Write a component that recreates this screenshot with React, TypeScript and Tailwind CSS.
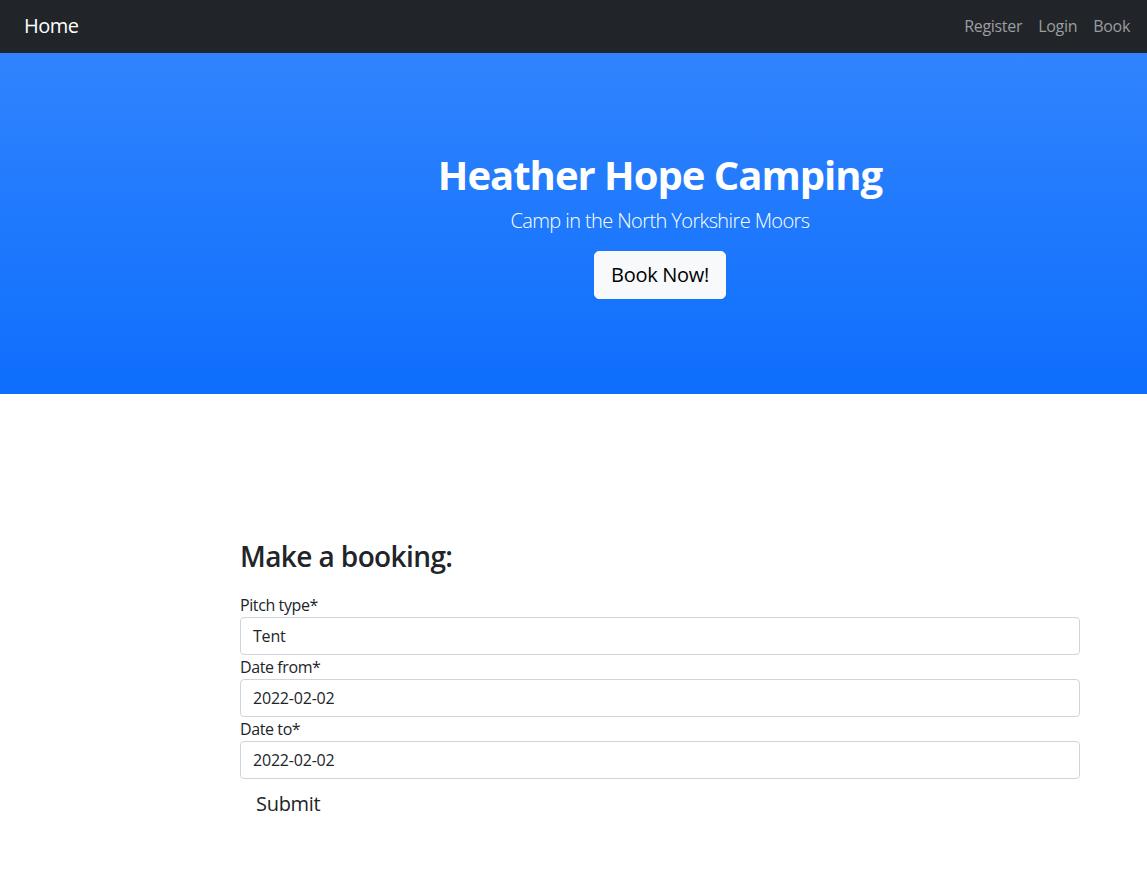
const font = { fontFamily: '"Open Sans", "Noto Sans", sans-serif' };

const Field = ({ label, value }: { label: string; value: string }) => (
  <div>
    <label className="block text-[16px] leading-[24px] tracking-[-0.4px] text-[#212529]">{label}</label>
    <div className="h-[38px] w-full rounded-[4px] border border-[#ced4da] bg-white px-3 text-[16px] leading-[36px] tracking-[-0.2px] text-[#212529]">
      {value}
    </div>
  </div>
);

export default function App() {
  return (
    <div className="min-h-screen bg-white text-[#212529]" style={font}>
      <nav className="flex h-[53px] items-center justify-between bg-[#212529] pb-[2px] pl-6 pr-[9px]">
        <a className="text-[20px] tracking-[-0.5px] text-white">Home</a>
        <div className="flex text-[16px] tracking-[-0.3px] text-[#9b9d9f]">
          <a className="px-2">Register</a>
          <a className="px-2">Login</a>
          <a className="px-2">Book</a>
        </div>
      </nav>

      <header className="h-[341px] bg-[linear-gradient(180deg,#3184fd,#0d6efd)] pl-[173px] pt-[98px] text-center text-white">
        <h1 className="text-[40px] font-bold leading-[1.2] tracking-[-1px]">Heather Hope Camping</h1>
        <p className="mt-[7px] text-[20px] font-light leading-[1.5] tracking-[-0.6px]">Camp in the North Yorkshire Moors</p>
        <button className="mt-[15px] rounded-[5px] border border-[#f8f9fa] bg-[#f8f9fa] px-4 py-2 text-[20px] leading-[30px] tracking-[-0.3px] text-black">
          Book Now!
        </button>
      </header>

      <main className="ml-[240px] w-[840px] pt-[146px]">
        <h2 className="mb-[19px] text-[28px] font-semibold leading-[1.2] tracking-[-0.6px]">Make a booking:</h2>
        <Field label="Pitch type*" value="Tent" />
        <Field label="Date from*" value="2022-02-02" />
        <Field label="Date to*" value="2022-02-02" />
        <button className="mt-[2px] px-4 py-2 text-[20px] leading-[30px] tracking-[-0.3px] text-[#212529]">Submit</button>
      </main>
    </div>
  );
}
